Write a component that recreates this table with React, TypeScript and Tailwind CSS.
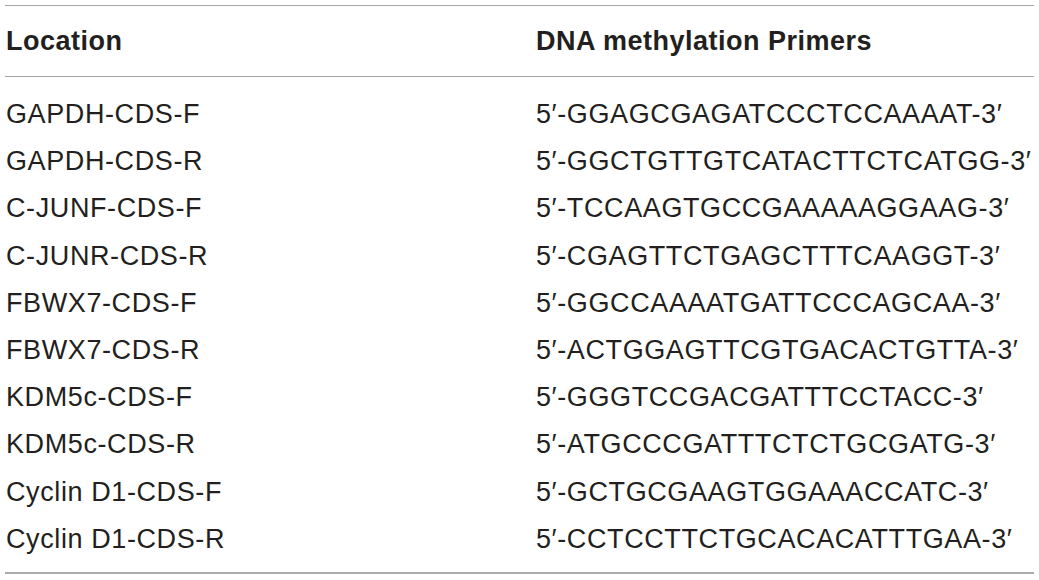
const rows: [string, string][] = [
  ["GAPDH-CDS-F", "5′-GGAGCGAGATCCCTCCAAAAT-3′"],
  ["GAPDH-CDS-R", "5′-GGCTGTTGTCATACTTCTCATGG-3′"],
  ["C-JUNF-CDS-F", "5′-TCCAAGTGCCGAAAAAGGAAG-3′"],
  ["C-JUNR-CDS-R", "5′-CGAGTTCTGAGCTTTCAAGGT-3′"],
  ["FBWX7-CDS-F", "5′-GGCCAAAATGATTCCCAGCAA-3′"],
  ["FBWX7-CDS-R", "5′-ACTGGAGTTCGTGACACTGTTA-3′"],
  ["KDM5c-CDS-F", "5′-GGGTCCGACGATTTCCTACC-3′"],
  ["KDM5c-CDS-R", "5′-ATGCCCGATTTCTCTGCGATG-3′"],
  ["Cyclin D1-CDS-F", "5′-GCTGCGAAGTGGAAACCATC-3′"],
  ["Cyclin D1-CDS-R", "5′-CCTCCTTCTGCACACATTTGAA-3′"],
];

export default function App() {
  return (
    <div className="w-[1039px] h-[580px] bg-white pt-[5px] px-[5px] font-['Liberation_Sans',Arial,sans-serif] text-[27px] text-[#231f20]">
      <div className="border-t border-[#a3a3a3]">
        <div className="grid grid-cols-[530px_1fr] h-[71px] items-center font-bold leading-[31px] tracking-[0.5px] border-b border-[#a3a3a3] pl-[1px] whitespace-nowrap">
          <div>Location</div>
          <div>DNA methylation Primers</div>
        </div>
        <div className="pt-[14px] pb-[9px] border-b-2 border-[#ababab] pl-[1px]">
          {rows.map(([loc, primer]) => (
            <div key={loc} className="grid grid-cols-[530px_1fr] leading-[47.2px] tracking-[0.6px] whitespace-nowrap">
              <div>{loc}</div>
              <div>{primer}</div>
            </div>
          ))}
        </div>
      </div>
    </div>
  );
}
